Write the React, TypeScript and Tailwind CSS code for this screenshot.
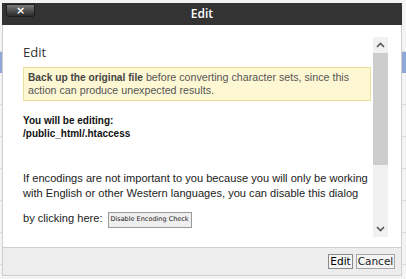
import React from "react";

function Chevron({ up }: { up?: boolean }) {
  return (
    <svg width="9" height="6" viewBox="0 0 9 6" className="block">
      <path
        d={up ? "M1 5 L4.5 1.5 L8 5" : "M1 1 L4.5 4.5 L8 1"}
        fill="none"
        stroke="#555"
        strokeWidth="1.6"
      />
    </svg>
  );
}

export default function App() {
  const rows = [0, 1, 2, 3, 4, 5, 6, 7];
  return (
    <div className="relative w-[406px] h-[279px] overflow-hidden bg-[#f3f3f3]" style={{ fontFamily: "'Liberation Sans', Arial, sans-serif" }}>
      {/* page behind */}
      <div className="flex flex-col pt-[20px]">
        <div className="h-[32px] border-b border-[#dcdcdc]" />
        <div className="h-[21px] bg-[#8fa6d8]" />
        {rows.map((r) => (
          <div key={r} className="h-[32px] border-b border-[#dcdcdc]" />
        ))}
      </div>

      {/* dialog */}
      <div className="absolute left-[2px] top-[3px] w-[400px] h-[273px] flex flex-col border-b border-[#cfcfcf]">
        <div className="relative h-[22px] bg-[#333333] flex items-center justify-center">
          <div className="absolute left-[4px] top-[1px] w-[29px] h-[13px] rounded-b-[3px] border border-[#1e1e1e] bg-gradient-to-b from-[#7a7a7a] to-[#2c2c2c] flex items-center justify-center">
            <span className="text-white text-[11px] font-bold leading-none" style={{ fontFamily: "'DejaVu Sans', sans-serif" }}>×</span>
          </div>
          <span className="text-white text-[12px] font-semibold" style={{ fontFamily: "'Open Sans', sans-serif" }}>Edit</span>
        </div>

        <div className="flex-1 flex bg-white border-x border-[#cfcfcf]">
          <div className="flex-1 pl-[20px] pr-[2px] pt-[19px]">
            <div className="text-[13px] leading-[16px] text-[#333]" style={{ fontFamily: "'Open Sans', sans-serif" }}>Edit</div>
            <div className="mt-[7px] border border-[#ebdf9c] bg-[#fdf8d3] px-[4px] py-[3px] text-[10.7px] leading-[13px] text-[#555]">
              <b className="text-[10.2px] text-[#444]">Back up the original file</b> before converting character sets, since this action can produce unexpected results.
            </div>
            <div className="mt-[13px] text-[10px] leading-[13px] font-bold text-[#111]">
              <div>You will be editing:</div>
              <div>/public_html/.htaccess</div>
            </div>
            <div className="mt-[31px] text-[11.1px] leading-[14.5px] text-[#222]">
              If encodings are not important to you because you will only be working with English or other Western languages, you can disable this dialog
            </div>
            <div className="mt-[10px] flex items-end text-[11.1px] text-[#222]">
              <span className="mb-[1px]">by clicking here:</span>
              <button className="ml-[5px] h-[16px] w-[84px] border border-[#9a9a9a] bg-[#eeeeee] text-[6.5px] text-[#222] leading-none whitespace-nowrap" style={{ fontFamily: "'DejaVu Sans', sans-serif" }}>
                Disable Encoding Check
              </button>
            </div>
          </div>
          <div className="w-[15px] mt-[12px] mb-[10px] mr-[13px] bg-[#f1f1f1] flex flex-col">
            <div className="h-[16px] flex items-center justify-center">
              <Chevron up />
            </div>
            <div className="h-[112px] bg-[#cdcdcd]" />
            <div className="flex-1" />
            <div className="h-[16px] flex items-center justify-center">
              <Chevron />
            </div>
          </div>
        </div>

        <div className="h-[28px] bg-[#ededed] border-x border-t border-[#cfcfcf] flex items-center justify-end gap-[3px] pr-[6px]" style={{ fontFamily: "'DejaVu Sans', sans-serif" }}>
          <button className="h-[15px] w-[25px] border border-[#8a8a8a] bg-[#f4f4f4] text-[10.5px] leading-none text-black">Edit</button>
          <button className="h-[15px] w-[39px] border border-[#a5a5a5] bg-[#f4f4f4] text-[10.5px] leading-none text-[#222]">Cancel</button>
        </div>
      </div>
    </div>
  );
}
